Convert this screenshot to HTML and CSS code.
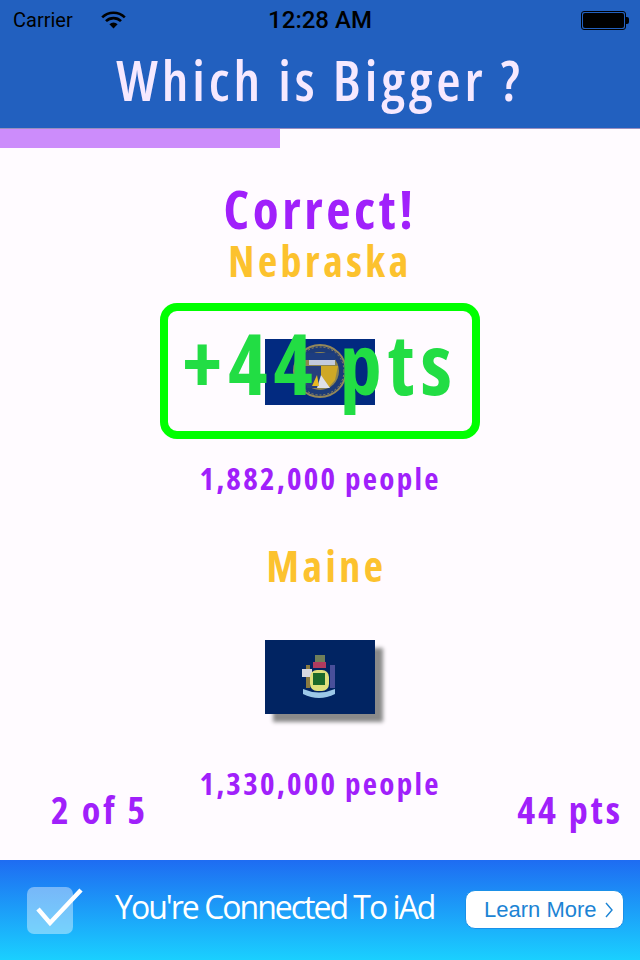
FILE: index.html
```html
<!DOCTYPE html>
<html lang="en">
<head>
    <meta charset="UTF-8">
    <title>Which is Bigger ?</title>
    <link rel="stylesheet" href="styles.css">
</head>
<body>
    <svg class="defs" width="0" height="0">
        <filter id="soft"><feGaussianBlur stdDeviation="0.7"/></filter>
    </svg>
    <header class="top">
        <div class="status">
            <div class="status-left">
                <span>Carrier</span>
                <svg class="wifi" width="25" height="18" viewBox="0 0 25 18">
                    <path d="M1.2 6.4a16 16 0 0 1 22.6 0" fill="none" stroke="#000" stroke-width="2.6"/>
                    <path d="M5 10.2a10.6 10.6 0 0 1 15 0" fill="none" stroke="#000" stroke-width="2.6"/>
                    <path d="M8.4 13.2a6 6 0 0 1 8.2 0l-4.1 4.4z" fill="#000"/>
                </svg>
            </div>
            <div class="status-time">12:28 AM</div>
            <div class="battery"><span class="battery-fill"></span></div>
        </div>
        <h1 class="title">Which is Bigger ?</h1>
    </header>
    <div class="progress"><div class="progress-fill" style="width: 280px"></div></div>

    <main class="game">
        <div class="result">Correct!</div>
        <div class="state">Nebraska</div>
        <div class="answer-box">
            <svg class="flag" width="110" height="66" viewBox="0 0 110 66">
                <rect width="110" height="66" fill="#022a80"/>
                <g filter="url(#soft)">
                    <circle cx="55" cy="32" r="27" fill="#93875a"/>
                    <circle cx="55" cy="32" r="25" fill="#1e3a78"/>
                    <circle cx="55" cy="32" r="24" fill="none" stroke="#8f8860" stroke-width="1" stroke-dasharray="2 2"/>
                    <circle cx="55" cy="32" r="19" fill="#8d8550"/>
                    <rect x="40" y="14" width="30" height="7" fill="#1f3d80"/>
                    <rect x="44" y="21" width="26" height="5" fill="#c3cbdd"/>
                    <path d="M56 27h17l-3 14-6 7-8-12z" fill="#cfa826"/>
                    <path d="M38 27h18v22h-14z" fill="#25407c"/>
                    <path d="M52 49l4-13 9 13z" fill="#dfe0e8"/>
                    <path d="M47 47l5-11 2 11z" fill="#e8b820"/>
                </g>
            </svg>
            <div class="points-pop">+44 pts</div>
        </div>
        <div class="people">1,882,000 people</div>

        <div class="state state-second">Maine</div>
        <svg class="flag flag-shadow" width="110" height="74" viewBox="0 0 110 74">
            <rect width="110" height="74" fill="#012462"/>
            <g filter="url(#soft)">
                <rect x="50" y="15" width="10" height="8" fill="#6f7f5a"/>
                <rect x="48" y="22" width="13" height="6" fill="#b03a5e"/>
                <rect x="41" y="25" width="4" height="23" fill="#8a7a40"/>
                <rect x="37" y="29" width="10" height="8" fill="#d8d8e0"/>
                <rect x="65" y="25" width="5" height="23" fill="#4a4f9a"/>
                <rect x="45" y="30" width="19" height="21" rx="7" fill="#dfe07c"/>
                <rect x="48" y="33" width="12" height="12" fill="#1d6a2c"/>
                <path d="M38 49q16 7 32 0v5q-16 8-32 0z" fill="#9cc8e8"/>
            </g>
        </svg>
        <div class="people people-second">1,330,000 people</div>
        <div class="score-row">
            <span>2 of 5</span>
            <span>44 pts</span>
        </div>
    </main>

    <footer class="ad">
        <svg class="ad-check" width="58" height="52" viewBox="0 0 58 52">
            <rect x="0" y="5" width="46" height="47" rx="7" fill="#fff" fill-opacity="0.4"/>
            <path d="M11 27l12 14 31-33" fill="none" stroke="#fff" stroke-width="4.5"/>
        </svg>
        <div class="ad-text">You're Connected To iAd</div>
        <div class="ad-btn">
            Learn More
            <svg class="ad-arrow" width="8" height="16" viewBox="0 0 8 16">
                <path d="M1 1l6 7-6 7" fill="none" stroke="#1c84d4" stroke-width="1.4"/>
            </svg>
        </div>
    </footer>
</body>
</html>
```

FILE: styles.css
```css
* {
    box-sizing: border-box;
}
body {
    margin: 0;
    width: 640px;
    height: 960px;
    overflow: hidden;
    display: flex;
    flex-direction: column;
    background-color: #fffbff;
    font-family: 'Open Sans', sans-serif;
    font-stretch: 75%;
    font-weight: 700;
    color: #a020fb;
}
.defs {
    position: absolute;
}
.top {
    height: 129px;
    background-color: #2260bf;
    border-bottom: 1px solid #9a8fc0;
}
.status {
    height: 40px;
    padding: 0 14px 0 13px;
    display: flex;
    align-items: center;
    justify-content: space-between;
    position: relative;
    font-family: 'Roboto', sans-serif;
    font-stretch: 100%;
    font-weight: 400;
    font-size: 20px;
    color: #000;
}
.status-left {
    display: flex;
    align-items: center;
    gap: 28px;
}
.status-time {
    position: absolute;
    left: 0;
    right: 0;
    text-align: center;
    font-weight: 500;
    font-size: 24px;
}
.battery {
    width: 45px;
    height: 19px;
    border: 1px solid #000;
    border-radius: 3px;
    padding: 1px;
    position: relative;
}
.battery-fill {
    display: block;
    height: 100%;
    background-color: #000;
    border-radius: 2px;
}
.battery:after {
    content: "";
    position: absolute;
    right: -4px;
    top: 5px;
    width: 3px;
    height: 7px;
    background-color: #000;
    border-radius: 0 2px 2px 0;
}
.title {
    margin: 0;
    height: 78px;
    line-height: 78px;
    text-align: center;
    font-size: 56px;
    font-weight: 600;
    letter-spacing: 0.07em;
    color: #f6e9ff;
}
.progress {
    height: 19px;
}
.progress-fill {
    height: 100%;
    background-color: #cc8cfb;
}
.game {
    flex: 1;
    display: flex;
    flex-direction: column;
    align-items: center;
    padding: 32px 17px 0;
}
.result {
    font-size: 53px;
    line-height: 58px;
    letter-spacing: 3.6px;
}
.state {
    font-size: 42px;
    line-height: 46px;
    letter-spacing: 3.5px;
    color: #fcc22e;
}
.answer-box {
    margin-top: 19px;
    padding-top: 2px;
    width: 320px;
    height: 136px;
    border: 8px solid #00ff00;
    border-radius: 17px;
    display: flex;
    align-items: center;
    justify-content: center;
    position: relative;
}
.flag {
    display: block;
}
.flag-shadow {
    margin-top: 51px;
    box-shadow: 8px 8px 4px #8a8a8a;
}
.points-pop {
    position: absolute;
    left: -8px;
    right: -8px;
    top: 2px;
    text-align: center;
    white-space: nowrap;
    font-size: 84px;
    line-height: 100px;
    letter-spacing: 6px;
    color: #22dd44;
    filter: blur(0.6px);
}
.people {
    margin-top: 19px;
    font-size: 31px;
    line-height: 40px;
    letter-spacing: 2.25px;
}
.state-second {
    margin-top: 45px;
    padding-left: 13px;
}
.people-second {
    margin-top: 49px;
}
.score-row {
    width: 100%;
    margin-top: -16px;
    display: flex;
    justify-content: space-between;
    padding-left: 34px;
    font-size: 38px;
    line-height: 44px;
    letter-spacing: 3px;
}
.ad {
    height: 100px;
    flex-shrink: 0;
    padding: 0 16px 0 27px;
    display: flex;
    align-items: center;
    background: linear-gradient(#1e6cf2, #1ad0ff);
    color: #fff;
    font-weight: 400;
}
.ad-check {
    width: 58px;
    height: 52px;
    margin-top: -5px;
}
.ad-text {
    margin-left: 30px;
    width: 350px;
    margin-top: -7px;
    font-family: 'Open Sans', sans-serif;
    font-stretch: 100%;
    font-size: 32px;
    letter-spacing: -2px;
}
.ad-btn {
    width: 159px;
    height: 39px;
    margin-top: -2px;
    padding-left: 18px;
    border: 1px solid #1a90e8;
    border-radius: 10px;
    background-color: #fff;
    color: #1c84d4;
    font-family: 'Liberation Sans', sans-serif;
    font-stretch: 100%;
    font-size: 22px;
    line-height: 37px;
    white-space: nowrap;
}
.ad-arrow {
    margin-left: 2px;
    vertical-align: -1px;
}
```
